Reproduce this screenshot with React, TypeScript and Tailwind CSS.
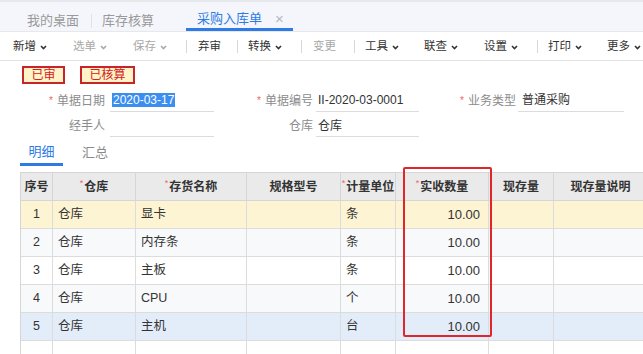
import React from "react";

const FONT = { fontFamily: '"Liberation Sans", "Noto Sans CJK SC", sans-serif' };

function Chevron() {
  return (
    <svg width="7" height="5" viewBox="0 0 7 5" className="ml-[4px] mt-[1px]" aria-hidden>
      <path d="M1 1 L3.5 3.5 L6 1" fill="none" stroke="currentColor" strokeWidth="1.6" />
    </svg>
  );
}

function Sep({ ml }: { ml: string }) {
  return <span className={`${ml} h-[13px] w-px bg-[#d6d8dc]`} />;
}

function Tool({ label, ml, dim, menu }: { label: string; ml: string; dim?: boolean; menu?: boolean }) {
  return (
    <span className={`${ml} flex items-center ${dim ? "text-[#a8a8a8]" : "text-[#333]"}`}>
      {label}
      {menu && <Chevron />}
    </span>
  );
}

function Req() {
  return <span className="mr-[4px] text-[10px] text-[#e66]">*</span>;
}

function Label({ w, req, children }: { w: string; req?: boolean; children: React.ReactNode }) {
  return (
    <div className={`${w} flex shrink-0 items-center justify-end text-[#8c8c8c]`}>
      {req && <Req />}
      {children}
    </div>
  );
}

function Input({ w, ml, children }: { w: string; ml: string; children?: React.ReactNode }) {
  return (
    <div className={`${w} ${ml} flex h-full shrink-0 items-center border-b border-[#dcdcdc] pl-[2px] text-[#333]`}>
      {children}
    </div>
  );
}

const COLS = ["w-[32px]", "w-[83px]", "w-[111px]", "w-[94px]", "w-[55px]", "w-[93px]", "w-[65px]", "w-[94px]"];

const HEAD: { t: string; req?: boolean }[] = [
  { t: "序号" },
  { t: "仓库", req: true },
  { t: "存货名称", req: true },
  { t: "规格型号" },
  { t: "计量单位", req: true },
  { t: "实收数量", req: true },
  { t: "现存量" },
  { t: "现存量说明" },
];

const ROWS = [
  { n: "1", wh: "仓库", name: "显卡", unit: "条", qty: "10.00", bg: "bg-[#fdf4d3]" },
  { n: "2", wh: "仓库", name: "内存条", unit: "条", qty: "10.00", bg: "bg-[#f8f9fb]" },
  { n: "3", wh: "仓库", name: "主板", unit: "条", qty: "10.00", bg: "bg-white" },
  { n: "4", wh: "仓库", name: "CPU", unit: "个", qty: "10.00", bg: "bg-[#f8f9fb]" },
  { n: "5", wh: "仓库", name: "主机", unit: "台", qty: "10.00", bg: "bg-[#e3edf9]" },
];

export default function App() {
  return (
    <div className="relative h-[354px] w-[643px] overflow-hidden bg-white text-[12px]" style={FONT}>
      {/* tab strip */}
      <div className="flex h-[32px] items-center border-t-2 border-b border-[#e6e8ec] bg-[#f4f6fb] text-[13px] text-[#9a9a9a]">
        <span className="ml-[27px] mt-[9px]">我的桌面</span>
        <span className="ml-[12px] mt-[9px] h-[14px] w-px bg-[#dfe2e8]" />
        <span className="ml-[10px] mt-[9px]">库存核算</span>
        <div className="ml-[32px] flex h-full items-center border-b-[3px] border-[#2f7be6] pt-[7px] pl-[11px] pr-[9px]">
          <span className="text-[#2f7be6]">采购入库单</span>
          <span className="ml-[13px] text-[15px] leading-none text-[#b5b8bd]">×</span>
        </div>
      </div>

      {/* toolbar */}
      <div className="flex h-[29px] items-center border-b border-[#e3e3e3] pt-[1px] text-[11.5px]">
        <Tool ml="ml-[13px]" label="新增" menu />
        <Tool ml="ml-[26px]" label="选单" dim menu />
        <Tool ml="ml-[26px]" label="保存" dim menu />
        <Sep ml="ml-[19px]" />
        <Tool ml="ml-[11px]" label="弃审" />
        <Sep ml="ml-[16px]" />
        <Tool ml="ml-[10px]" label="转换" menu />
        <Sep ml="ml-[19px]" />
        <Tool ml="ml-[11px]" label="变更" dim />
        <Sep ml="ml-[18px]" />
        <Tool ml="ml-[10px]" label="工具" menu />
        <Tool ml="ml-[25px]" label="联查" menu />
        <Tool ml="ml-[26px]" label="设置" menu />
        <Sep ml="ml-[19px]" />
        <Tool ml="ml-[10px]" label="打印" menu />
        <Tool ml="ml-[25px]" label="更多" menu />
      </div>

      {/* status badges */}
      <div className="mt-[5px] flex h-[18px] text-[12px] text-[#d42020]">
        <span className="ml-[22px] flex w-[43px] items-center justify-center border-2 border-[#c9242a] bg-[#fff3c8]">已审</span>
        <span className="ml-[15px] flex w-[55px] items-center justify-center border-2 border-[#c9242a] bg-[#fff3c8]">已核算</span>
      </div>

      {/* form */}
      <div className="mt-[5px] flex h-[23px] items-center text-[12px]">
        <Label w="w-[105px]" req>单据日期</Label>
        <Input w="w-[104px]" ml="ml-[5px]">
          <span className="bg-[#3a8ef0] px-[1px] leading-[14px] text-white">2020-03-17</span>
        </Input>
        <Label w="w-[99px]" req>单据编号</Label>
        <Input w="w-[103px]" ml="ml-[3px]">II-2020-03-0001</Input>
        <Label w="w-[97px]" req>业务类型</Label>
        <Input w="w-[106px]" ml="ml-[2px]">
          <span className="pl-[2px]">普通采购</span>
        </Input>
      </div>
      <div className="mt-[3px] flex h-[22px] items-center text-[12px]">
        <Label w="w-[105px]">经手人</Label>
        <Input w="w-[104px]" ml="ml-[5px]" />
        <Label w="w-[99px]">仓库</Label>
        <Input w="w-[103px]" ml="ml-[3px]">仓库</Input>
      </div>

      {/* detail tabs */}
      <div className="mt-[2px] flex h-[27px] items-stretch text-[13px]">
        <div className="ml-[20px] flex w-[43px] items-center justify-center border-b-[3px] border-[#2f7be6] pt-[1px] text-[#2f7be6]">
          明细
        </div>
        <div className="ml-[19px] flex items-center text-[#8a8a8a]">汇总</div>
      </div>

      {/* grid */}
      <div className="ml-[20px] mt-[6px] w-[700px] border-t border-l border-[#d6d6d6] text-[12.5px] text-[#333]">
        <div className="flex h-[28px] bg-[#eaeaea] text-[12px] font-bold">
          {HEAD.map((h, i) => (
            <div
              key={h.t}
              className={`${COLS[i]} flex shrink-0 items-center justify-center whitespace-nowrap border-r border-b border-[#d6d6d6]`}
            >
              {h.req && <span className="mr-[1px] -mt-[6px] text-[9px] font-normal text-[#e66]">*</span>}
              {h.t}
            </div>
          ))}
        </div>
        {ROWS.map((r) => (
          <div key={r.n} className={`flex h-[28px] ${r.bg}`}>
            <div className={`${COLS[0]} flex shrink-0 items-center justify-center border-r border-b border-[#dcdcdc]`}>{r.n}</div>
            <div className={`${COLS[1]} flex shrink-0 items-center border-r border-b border-[#dcdcdc] pl-[5px]`}>{r.wh}</div>
            <div className={`${COLS[2]} flex shrink-0 items-center border-r border-b border-[#dcdcdc] pl-[5px]`}>{r.name}</div>
            <div className={`${COLS[3]} shrink-0 border-r border-b border-[#dcdcdc]`} />
            <div className={`${COLS[4]} flex shrink-0 items-center border-r border-b border-[#dcdcdc] pl-[5px]`}>{r.unit}</div>
            <div className={`${COLS[5]} flex shrink-0 items-center justify-end border-r border-b border-[#dcdcdc] pr-[8px] text-[13px]`}>{r.qty}</div>
            <div className={`${COLS[6]} shrink-0 border-r border-b border-[#dcdcdc]`} />
            <div className={`${COLS[7]} shrink-0 border-r border-b border-[#dcdcdc]`} />
          </div>
        ))}
        <div className="flex h-[28px] bg-white">
          <div className={`${COLS[0]} flex shrink-0 items-end justify-center border-r border-[#dcdcdc] text-[#d0d0d0]`}>6</div>
          {COLS.slice(1).map((c, i) => (
            <div key={i} className={`${c} shrink-0 border-r border-[#dcdcdc]`} />
          ))}
        </div>
      </div>

      {/* annotation box around received quantity */}
      <div className="absolute left-[403px] top-[167px] h-[170px] w-[89px] rounded-[2px] border-2 border-[#e0262a]" />
    </div>
  );
}
